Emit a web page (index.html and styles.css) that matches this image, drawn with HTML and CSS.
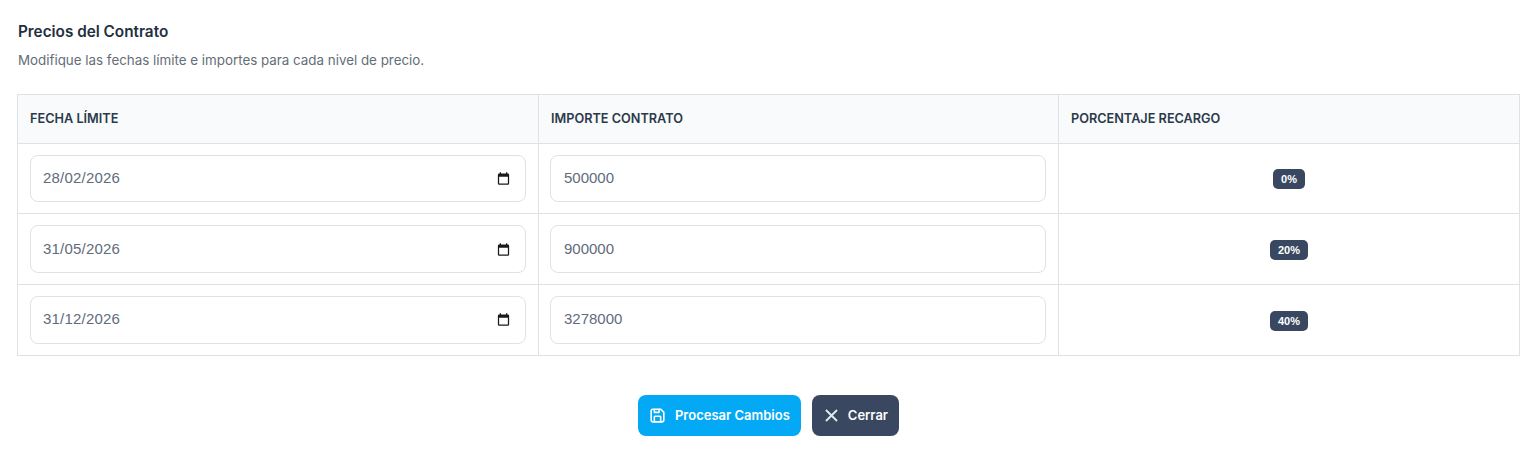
FILE: index.html
```html
<!DOCTYPE html>
<html lang="es">
<head>
  <meta charset="UTF-8" />
  <title>Precios del Contrato</title>
  <link rel="stylesheet" href="styles.css">
</head>
<body>
  <h2 class="title">Precios del Contrato</h2>
  <p class="subtitle">Modifique las fechas límite e importes para cada nivel de precio.</p>

  <table class="prices">
    <thead>
      <tr>
        <th class="col-date">FECHA LÍMITE</th>
        <th class="col-amount">IMPORTE CONTRATO</th>
        <th>PORCENTAJE RECARGO</th>
      </tr>
    </thead>
    <tbody>
      <tr>
        <td>
          <div class="field date">
            <input type="text" value="28/02/2026" />
            <svg class="cal" viewBox="0 0 24 24"><path d="M19 4h-1V2h-2v2H8V2H6v2H5a2 2 0 0 0-2 2v14a2 2 0 0 0 2 2h14a2 2 0 0 0 2-2V6a2 2 0 0 0-2-2zm0 16H5V9h14v11z"/></svg>
          </div>
        </td>
        <td><div class="field amount"><input type="text" value="500000" /></div></td>
        <td class="center"><span class="badge">0%</span></td>
      </tr>
      <tr>
        <td>
          <div class="field date">
            <input type="text" value="31/05/2026" />
            <svg class="cal" viewBox="0 0 24 24"><path d="M19 4h-1V2h-2v2H8V2H6v2H5a2 2 0 0 0-2 2v14a2 2 0 0 0 2 2h14a2 2 0 0 0 2-2V6a2 2 0 0 0-2-2zm0 16H5V9h14v11z"/></svg>
          </div>
        </td>
        <td><div class="field amount"><input type="text" value="900000" /></div></td>
        <td class="center"><span class="badge">20%</span></td>
      </tr>
      <tr>
        <td>
          <div class="field date">
            <input type="text" value="31/12/2026" />
            <svg class="cal" viewBox="0 0 24 24"><path d="M19 4h-1V2h-2v2H8V2H6v2H5a2 2 0 0 0-2 2v14a2 2 0 0 0 2 2h14a2 2 0 0 0 2-2V6a2 2 0 0 0-2-2zm0 16H5V9h14v11z"/></svg>
          </div>
        </td>
        <td><div class="field amount"><input type="text" value="3278000" /></div></td>
        <td class="center"><span class="badge">40%</span></td>
      </tr>
    </tbody>
  </table>

  <div class="actions">
    <button class="btn btn-primary">
      <svg viewBox="0 0 24 24" fill="none" stroke="currentColor" stroke-width="2" stroke-linecap="round" stroke-linejoin="round"><path d="M6 4h10l4 4v10a2 2 0 0 1-2 2H6a2 2 0 0 1-2-2V6a2 2 0 0 1 2-2"/><path d="M8 20v-6a1 1 0 0 1 1-1h6a1 1 0 0 1 1 1v6"/><path d="M14 4v4H8V4"/></svg>
      Procesar Cambios
    </button>
    <button class="btn btn-dark">
      <svg viewBox="0 0 24 24" fill="none" stroke="#e4e7ec" stroke-width="2.4"><path d="M5 5l14 14M19 5L5 19"/></svg>
      Cerrar
    </button>
  </div>
</body>
</html>
```

FILE: styles.css
```css
body {
  margin: 0;
  padding: 23px 19px 0 17px;
  background-color: #fff;
  color: #384551;
  font-family: 'Inter', 'Liberation Sans', sans-serif;
}

.title {
  margin: 0 0 0 1px;
  font-size: 15.3px;
  line-height: 18px;
  font-weight: 600;
  color: #22303e;
}

.subtitle {
  margin: 11px 0 25.6px 1px;
  font-size: 13.36px;
  line-height: 16px;
  color: #646e78;
}

.prices {
  width: 1503px;
  table-layout: fixed;
  border-collapse: collapse;
}

.prices th,
.prices td {
  border: 1px solid #dde2e7;
}

.prices th {
  height: 48px;
  padding: 0 12px;
  background-color: #f9fafc;
  text-align: left;
  font-size: 12.7px;
  font-weight: 600;
  color: #2b3a4a;
}

.col-date { width: 496px; }
.col-amount { width: 495px; }

.prices td {
  height: 69.67px;
  padding: 0 12px;
}

.prices td:nth-child(2) {
  padding-left: 11px;
}

.center {
  text-align: center;
}

.field {
  display: flex;
  align-items: center;
  height: 45.67px;
  padding: 0 14px 0 12px;
  border: 1px solid #dde2e7;
  border-radius: 8px;
  background-color: #fff;
}

.field.amount {
  padding-left: 13px;
}

.field input {
  flex: 1;
  min-width: 0;
  margin-bottom: 2px;
  padding: 0;
  border: none;
  outline: none;
  font-family: 'Liberation Sans', sans-serif;
  font-size: 15px;
  color: #5f6c7b;
}

.field.date input {
  letter-spacing: 0.2px;
}

.cal {
  width: 15px;
  height: 15px;
  fill: #1a1a1a;
}

.badge {
  display: inline-block;
  padding: 3px 8px;
  border-radius: 5px;
  background-color: #394860;
  color: #fff;
  font-family: 'Liberation Sans', sans-serif;
  font-size: 11px;
  line-height: 14px;
  font-weight: 700;
}

.actions {
  display: flex;
  justify-content: center;
  gap: 11px;
  margin-top: 39px;
}

.btn {
  display: flex;
  align-items: center;
  gap: 8px;
  height: 41px;
  padding: 0 11px 0 10px;
  border: none;
  border-radius: 8px;
  color: #fff;
  font-family: 'Inter', 'Liberation Sans', sans-serif;
  font-size: 13px;
  font-weight: 600;
}

.btn svg {
  width: 19px;
  height: 19px;
}

.btn-primary { background-color: #03a9f4; }
.btn-dark { background-color: #394860; gap: 7px; }
```
